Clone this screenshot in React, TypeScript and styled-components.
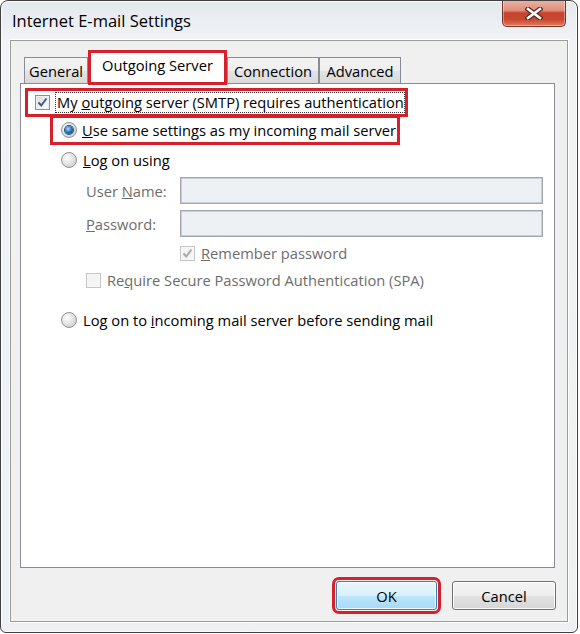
import React from "react";
import styled, { createGlobalStyle } from "styled-components";

const GlobalStyle = createGlobalStyle`
  html, body {
    margin: 0;
    padding: 0;
    background: #ffffff;
  }
  body {
    font-family: "Open Sans", "Liberation Sans", sans-serif;
    font-size: 14.7px;
    color: #000;
  }
`;

const Window = styled.div`
  width: 578px;
  height: 633px;
  box-sizing: border-box;
  border: 1px solid #414141;
  border-radius: 8px 8px 6px 6px;
  background: linear-gradient(180deg, #e4e9ee 0px, #f1f3f6 40px, #eef1f4 100%);
  box-shadow: inset 0 0 0 1px #fbfcfd;
  display: flex;
  flex-direction: column;
  overflow: hidden;
`;

const TitleBar = styled.div`
  height: 39px;
  display: flex;
  align-items: flex-start;
  justify-content: space-between;
  flex: none;
`;

const Title = styled.div`
  font-size: 16.5px;
  padding: 8px 0 0 11px;
  color: #000;
`;

const CloseButton = styled.div`
  width: 64px;
  height: 27px;
  box-sizing: border-box;
  margin: -1px 11px 0 0;
  border: 1px solid #7a3327;
  border-top: none;
  border-radius: 0 0 5px 5px;
  background: linear-gradient(
    180deg,
    #eab3a6 0%,
    #df8e7b 40%,
    #c8412a 50%,
    #c94a31 75%,
    #e17a5f 100%
  );
  box-shadow: inset 0 0 0 1px rgba(255, 255, 255, 0.35);
  display: flex;
  align-items: center;
  justify-content: center;
`;

const Client = styled.div`
  flex: 1;
  margin: 0 9px 10px 9px;
  border: 1px solid #9c9c9c;
  box-shadow: 0 0 0 1px #ffffff;
  background: #f0f0f0;
  display: flex;
  flex-direction: column;
`;

const TabStrip = styled.div`
  display: flex;
  align-items: flex-end;
  padding: 9px 0 0 13px;
`;

const Tab = styled.div<{ $active?: boolean; $w: number }>`
  width: ${(p) => p.$w}px;
  box-sizing: border-box;
  display: flex;
  align-items: center;
  justify-content: center;
  white-space: nowrap;
  ${(p) =>
    p.$active
      ? `
    height: 35px;
    margin-bottom: -2px;
    border: 3px solid #d6202c;
    background: #ffffff;
    position: relative;
    z-index: 1;
    padding-bottom: 5px;
  `
      : `
    height: 26px;
    border: 1px solid #898c95;
    border-bottom: none;
    background: linear-gradient(180deg, #f4f4f4 0%, #eeeeee 50%, #e4e4e4 51%, #d9d9d9 100%);
    padding-top: 1px;
  `}
`;

const Panel = styled.div`
  height: 485px;
  box-sizing: border-box;
  margin: 0 12px 0 9px;
  border: 1px solid #898c95;
  background: #ffffff;
  display: flex;
  flex-direction: column;
  padding: 4px 0 0 4px;
`;

const MarkedRow = styled.div<{ $w: number; $h: number; $left: number; $top: number; $pad: number }>`
  width: ${(p) => p.$w}px;
  height: ${(p) => p.$h}px;
  box-sizing: border-box;
  margin: ${(p) => p.$top}px 0 0 ${(p) => p.$left}px;
  border: 3px solid #d6202c;
  display: flex;
  align-items: center;
  padding-left: ${(p) => p.$pad}px;
  gap: 5px;
  overflow: hidden;
`;

const FocusLabel = styled.span`
  width: 350px;
  flex: none;
  box-sizing: border-box;
  border: 1px dotted #333;
  padding: 0 1px;
  white-space: nowrap;
  overflow: hidden;
  line-height: 19px;
`;

const Row = styled.div<{ $h: number; $left: number; $top?: number; $dim?: boolean; $gap?: number }>`
  height: ${(p) => p.$h}px;
  margin: ${(p) => p.$top ?? 0}px 0 0 ${(p) => p.$left}px;
  display: flex;
  align-items: center;
  gap: ${(p) => p.$gap ?? 6}px;
  white-space: nowrap;
  color: ${(p) => (p.$dim ? "#6d6d6d" : "#000")};
`;

const FieldLabel = styled.span`
  width: 94px;
  flex: none;
`;

const Input = styled.div`
  width: 363px;
  height: 27px;
  box-sizing: border-box;
  border: 1px solid #a3a8ae;
  box-shadow: inset 0 0 0 1px #c8ced4;
  background: #eef1f4;
`;

const Check = styled.span<{ $disabled?: boolean }>`
  flex: none;
  width: 15px;
  height: 15px;
  box-sizing: border-box;
  border: 1px solid ${(p) => (p.$disabled ? "#c4c4c4" : "#8e8f8f")};
  background: ${(p) =>
    p.$disabled ? "#f4f4f4" : "linear-gradient(135deg, #d7d7d7 0%, #f2f2f2 60%, #ffffff 100%)"};
  box-shadow: inset 0 0 0 1px ${(p) => (p.$disabled ? "#f9f9f9" : "#f0f0f0")};
  display: flex;
  align-items: center;
  justify-content: center;
`;

const Radio = styled.span<{ $on?: boolean }>`
  flex: none;
  width: 16px;
  height: 16px;
  box-sizing: border-box;
  border-radius: 50%;
  border: 1px solid #929292;
  background: radial-gradient(circle at 35% 35%, #ffffff 0%, #e4e4e4 45%, #c6c6c6 100%);
  display: flex;
  align-items: center;
  justify-content: center;
  &::after {
    content: "";
    display: ${(p) => (p.$on ? "block" : "none")};
    width: 8px;
    height: 8px;
    border-radius: 50%;
    background: radial-gradient(circle at 40% 35%, #b9e1fb 0%, #2a78c0 45%, #0c3a70 100%);
    box-shadow: 0 0 0 1px #1b4f86;
  }
`;

const ButtonRow = styled.div`
  display: flex;
  justify-content: flex-end;
  align-items: center;
  gap: 15px;
  padding: 13px 11px 0 0;
`;

const Button = styled.div<{ $default?: boolean; $w: number }>`
  width: ${(p) => p.$w}px;
  height: 29px;
  box-sizing: border-box;
  border-radius: 3px;
  display: flex;
  align-items: center;
  justify-content: center;
  border: 1px solid ${(p) => (p.$default ? "#3c7fb1" : "#707070")};
  background: ${(p) =>
    p.$default
      ? "linear-gradient(180deg, #eaf6fd 0%, #d9f0fc 50%, #bee6fd 51%, #a7d9f5 100%)"
      : "linear-gradient(180deg, #f4f4f4 0%, #eeeeee 50%, #e2e2e2 51%, #d6d6d6 100%)"};
  box-shadow: inset 0 0 0 1px rgba(255, 255, 255, 0.8);
  ${(p) => (p.$default ? "outline: 3px solid #d6202c; outline-offset: 1px;" : "")}
`;

const CheckMark = ({ color }: { color: string }) => (
  <svg width="11" height="11" viewBox="0 0 11 11">
    <path d="M1.5 5.5 L4.2 8.5 L9.5 1.5" fill="none" stroke={color} strokeWidth="2" />
  </svg>
);

const CloseGlyph = () => (
  <svg width="18" height="13" viewBox="0 0 18 13">
    <path d="M3 2 L15 11 M15 2 L3 11" stroke="#5a2a22" strokeWidth="5" strokeLinecap="square" />
    <path d="M3 2 L15 11 M15 2 L3 11" stroke="#ffffff" strokeWidth="2.6" strokeLinecap="square" />
  </svg>
);

const App = () => {
  return (
    <>
      <GlobalStyle />
      <Window>
        <TitleBar>
          <Title>Internet E-mail Settings</Title>
          <CloseButton>
            <CloseGlyph />
          </CloseButton>
        </TitleBar>

        <Client>
          <TabStrip>
            <Tab $w={64}>General</Tab>
            <Tab $w={139} $active>
              Outgoing Server
            </Tab>
            <Tab $w={92}>Connection</Tab>
            <Tab $w={82}>Advanced</Tab>
          </TabStrip>

          <Panel>
            <MarkedRow $w={383} $h={29} $left={0} $top={0} $pad={7}>
              <Check>
                <CheckMark color="#3f5a98" />
              </Check>
              <FocusLabel>
                My <u>o</u>utgoing server (SMTP) requires authentication
              </FocusLabel>
            </MarkedRow>

            <MarkedRow $w={350} $h={30} $left={25} $top={-2} $pad={8}>
              <Radio $on />
              <span>
                <u>U</u>se same settings as my incoming mail server
              </span>
            </MarkedRow>

            <Row $h={29} $left={36}>
              <Radio />
              <span>
                <u>L</u>og on using
              </span>
            </Row>

            <Row $h={27} $left={61} $top={3} $dim $gap={0}>
              <FieldLabel>
                User <u>N</u>ame:
              </FieldLabel>
              <Input />
            </Row>

            <Row $h={27} $left={61} $top={6} $dim $gap={0}>
              <FieldLabel>
                <u>P</u>assword:
              </FieldLabel>
              <Input />
            </Row>

            <Row $h={26} $left={155} $top={3} $dim>
              <Check $disabled>
                <CheckMark color="#a9a9a9" />
              </Check>
              <span>
                <u>R</u>emember password
              </span>
            </Row>

            <Row $h={26} $left={61} $top={1} $dim>
              <Check $disabled />
              <span>
                Re<u>q</u>uire Secure Password Authentication (SPA)
              </span>
            </Row>

            <Row $h={26} $left={36} $top={14}>
              <Radio />
              <span>
                Log on to <u>i</u>ncoming mail server before sending mail
              </span>
            </Row>
          </Panel>

          <ButtonRow>
            <Button $w={101} $default>
              OK
            </Button>
            <Button $w={104}>Cancel</Button>
          </ButtonRow>
        </Client>
      </Window>
    </>
  );
};

export default App;
